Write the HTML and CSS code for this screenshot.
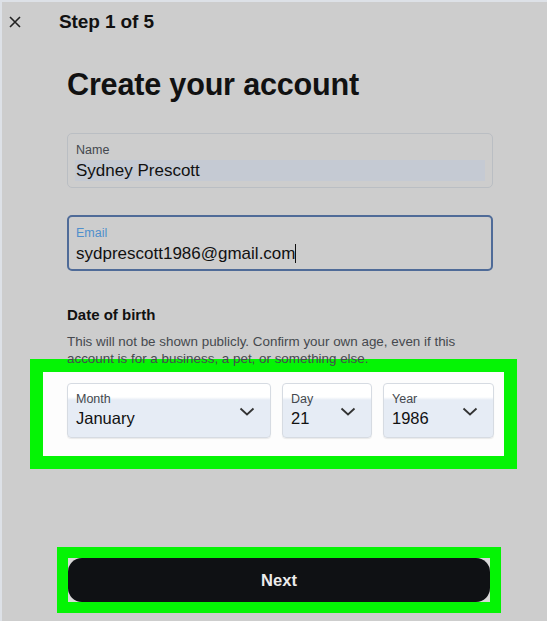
FILE: index.html
```html
<!DOCTYPE html>
<html lang="en">
<head>
  <meta charset="UTF-8">
  <meta name="viewport" content="width=device-width, initial-scale=1.0">
  <title>Create your account</title>
  <link rel="stylesheet" href="styles.css">
</head>
<body>
  <div class="screen">

    <header class="topbar">
      <span class="close">
        <svg width="12" height="12" viewBox="0 0 12 12"><path d="M1 1 L11 11 M11 1 L1 11" stroke="#222" stroke-width="1.6" fill="none"/></svg>
      </span>
      <span class="step">Step 1 of 5</span>
    </header>

    <main class="form">
      <h1>Create your account</h1>

      <!-- name -->
      <div class="field">
        <div class="label">Name</div>
        <div class="value selected">Sydney Prescott</div>
      </div>

      <!-- email, focused -->
      <div class="field focused">
        <div class="label">Email</div>
        <div class="value">sydprescott1986@gmail.com<span class="caret"></span></div>
      </div>

      <h2>Date of birth</h2>
      <p class="hint">This will not be shown publicly. Confirm your own age, even if this account is for a business, a pet, or something else.</p>

      <div class="highlight dob">
        <div class="select month">
          <div class="sel-text">
            <div class="label">Month</div>
            <div class="sel-value">January</div>
          </div>
          <svg class="chev" width="16" height="9" viewBox="0 0 16 9"><path d="M1.5 1.5 L8 7.5 L14.5 1.5" stroke="#333" stroke-width="1.8" fill="none"/></svg>
        </div>
        <div class="select day">
          <div class="sel-text">
            <div class="label">Day</div>
            <div class="sel-value">21</div>
          </div>
          <svg class="chev" width="16" height="9" viewBox="0 0 16 9"><path d="M1.5 1.5 L8 7.5 L14.5 1.5" stroke="#333" stroke-width="1.8" fill="none"/></svg>
        </div>
        <div class="select year">
          <div class="sel-text">
            <div class="label">Year</div>
            <div class="sel-value">1986</div>
          </div>
          <svg class="chev" width="16" height="9" viewBox="0 0 16 9"><path d="M1.5 1.5 L8 7.5 L14.5 1.5" stroke="#333" stroke-width="1.8" fill="none"/></svg>
        </div>
      </div>

      <div class="highlight next-wrap">
        <button class="next">Next</button>
      </div>
    </main>

  </div>
</body>
</html>
```

FILE: styles.css
```css
body {
  margin: 0;
  padding: 0;
  background: #cdcdcd;
  font-family: "Liberation Sans", Arial, sans-serif;
  color: #111;
}
.screen {
  height: 619px;
  border-top: 2px solid #dde1e7;
  border-left: 2px solid #dde1e7;
  overflow: hidden;
}
.topbar {
  height: 40px;
  display: flex;
  align-items: center;
}
.close {
  width: 50px;
  padding-left: 7px;
  display: flex;
  align-items: center;
}
.step {
  font-size: 19px;
  font-weight: bold;
  letter-spacing: -0.1px;
}
.form {
  width: 426px;
  padding-left: 65px;
}
h1 {
  margin: 25px 0 32px;
  font-size: 30.6px;
  line-height: 34px;
  font-weight: bold;
  letter-spacing: -0.2px;
}
.field {
  height: 55px;
  box-sizing: border-box;
  border: 1px solid #babec3;
  border-radius: 5px;
  padding: 9px 7px 0;
  margin-bottom: 27px;
}
.field .label {
  padding-left: 1px;
}
.label {
  font-size: 12.5px;
  line-height: 15px;
  color: #44484d;
}
.value {
  margin-top: 2px;
  padding-left: 1px;
  font-size: 17px;
  line-height: 21px;
}
.selected { background: #c5cad3; }
.field.focused {
  height: 56px;
  border: 2px solid #4f6b98;
  padding-top: 9px;
  padding-left: 6px;
}
.field.focused .label { color: #4f8fcc; }
.caret {
  display: inline-block;
  width: 1px;
  height: 19px;
  background: #111;
  vertical-align: -4px;
}
h2 {
  margin: 35px 0 9px;
  font-size: 15px;
  line-height: 18px;
  font-weight: bold;
}
.hint {
  margin: 0;
  font-size: 13.4px;
  line-height: 17px;
  color: #45494e;
}
.highlight {
  border: 13px solid #05f405;
}
.dob {
  margin: -8px -24px 0 -37px;
  background: #fdfdfd;
  padding: 11px 9px 18px 24px;
  display: flex;
  gap: 11px;
}
.select {
  height: 55px;
  box-sizing: border-box;
  border: 1px solid #d6dbe2;
  border-radius: 4px;
  background: linear-gradient(#ffffff 0, #ffffff 13px, #e6ecf5 16px);
  padding: 8px 15px 0 8px;
  display: flex;
  align-items: center;
  justify-content: space-between;
  box-shadow: 0 1px 1px rgba(0,0,0,0.08);
}
.sel-text { align-self: flex-start; }
.sel-value {
  margin-top: 1px;
  font-size: 16.5px;
  line-height: 20px;
}
.chev { margin-top: -6px; }
.month { width: 204px; }
.day { width: 90px; }
.year { width: 111px; }
.next-wrap {
  margin: 78px -8px 0 -10px;
  border-width: 11px;
  background: #d9d9d9;
}
.next {
  display: block;
  width: 100%;
  height: 44px;
  border: none;
  border-radius: 14px;
  background: #0f1114;
  color: #ececec;
  font-family: "Liberation Sans", Arial, sans-serif;
  font-size: 16.5px;
  font-weight: bold;
}
```
